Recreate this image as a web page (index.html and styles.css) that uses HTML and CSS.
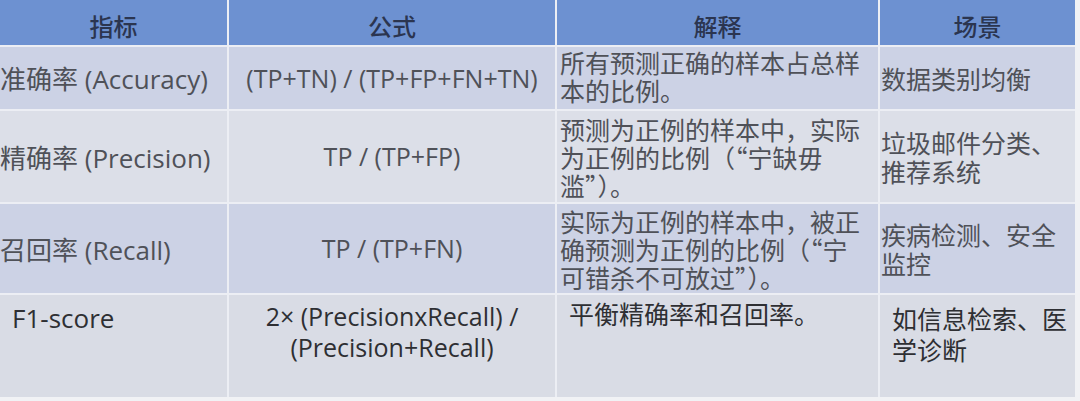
FILE: index.html
```html
<!DOCTYPE html>
<html lang="zh-CN">
<head>
<meta charset="utf-8">
<title>指标</title>
<link rel="stylesheet" href="styles.css">
</head>
<body>
<div class="table">
  <div class="th">指标</div>
  <div class="th">公式</div>
  <div class="th">解释</div>
  <div class="th">场景</div>

  <div class="td name r1">准确率 (Accuracy)</div>
  <div class="td formula r1">(TP+TN) / (TP+FP+FN+TN)</div>
  <div class="td desc r1 up">所有预测正确的样本占总样<br>本的比例。</div>
  <div class="td scene r1">数据类别均衡</div>

  <div class="td name r2">精确率 (Precision)</div>
  <div class="td formula r2">TP / (TP+FP)</div>
  <div class="td desc r2">预测为正例的样本中，实际<br>为正例的比例（“宁缺毋<br>滥”）。</div>
  <div class="td scene r2">垃圾邮件分类、<br>推荐系统</div>

  <div class="td name r3">召回率 (Recall)</div>
  <div class="td formula r3">TP / (TP+FN)</div>
  <div class="td desc r3">实际为正例的样本中，被正<br>确预测为正例的比例（“宁<br>可错杀不可放过”）。</div>
  <div class="td scene r3">疾病检测、安全<br>监控</div>

  <div class="td name r4 top">F1-score</div>
  <div class="td formula r4 top">2× (PrecisionxRecall) /<br>(Precision+Recall)</div>
  <div class="td desc r4 top">平衡精确率和召回率。</div>
  <div class="td scene r4 top">如信息检索、医<br>学诊断</div>
</div>
</body>
</html>
```
FILE: styles.css
```css
html, body {
  margin: 0;
  padding: 0;
  background: #f1f2f5;
}
body {
  width: 1080px;
  height: 401px;
  overflow: hidden;
  font-family: "Open Sans", "Noto Sans CJK SC", sans-serif;
}
.table {
  display: grid;
  grid-template-columns: 227px 326px 321px 195px;
  grid-template-rows: 45px 62px 91px 89px 102px;
  column-gap: 2px;
  row-gap: 2px;
  width: 1075px;
  background: #eceef4;
}
.th {
  background: #6d91d1;
  color: #2b3550;
  font-family: "Noto Sans CJK SC", sans-serif;
  font-size: 24px;
  font-weight: 500;
  display: flex;
  align-items: center;
  justify-content: center;
  padding-top: 5px;
  box-sizing: border-box;
}
.td {
  color: #4f5158;
  display: flex;
  align-items: center;
  box-sizing: border-box;
}
.r1, .r3 { background: #ccd2e5; }
.r2 { background: #dcdfe8; }
.r4 { background: #d9dce5; color: #2e2f33; }
.name {
  font-size: 26px;
  padding-left: 0;
  white-space: nowrap;
}
.formula {
  font-size: 25px;
  justify-content: center;
  text-align: center;
  line-height: 31px;
}
.desc {
  font-family: "Noto Sans CJK SC", sans-serif;
  font-size: 25px;
  line-height: 28px;
  padding-left: 3px;
}
.desc.up { padding-bottom: 4px; }
.scene {
  font-family: "Noto Sans CJK SC", sans-serif;
  font-size: 25px;
  line-height: 29px;
  padding-left: 1px;
}
.top {
  align-items: flex-start;
  padding-top: 6px;
}
.name.top { padding-left: 12px; padding-top: 5px; }
.desc.top { padding-left: 12px; padding-top: 4px; }
.scene.top { padding-left: 12px; padding-top: 8px; line-height: 31px; }
```
